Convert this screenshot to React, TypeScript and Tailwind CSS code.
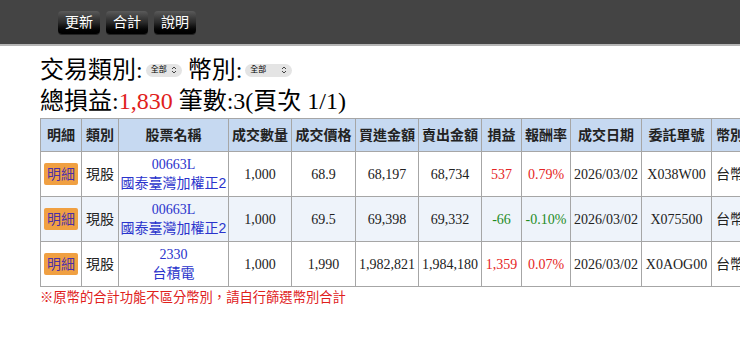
import React from "react";

const serif = "font-['Liberation_Serif','Noto_Sans_CJK_TC',serif]";
const sans = "font-['Liberation_Sans','Noto_Sans_CJK_TC',sans-serif]";

type Row = {
  code: string;
  name: string;
  qty: string;
  price: string;
  buy: string;
  sell: string;
  pl: string;
  rate: string;
  date: string;
  order: string;
  up: boolean;
};

const rows: Row[] = [
  { code: "00663L", name: "國泰臺灣加權正2", qty: "1,000", price: "68.9", buy: "68,197", sell: "68,734", pl: "537", rate: "0.79%", date: "2026/03/02", order: "X038W00", up: true },
  { code: "00663L", name: "國泰臺灣加權正2", qty: "1,000", price: "69.5", buy: "69,398", sell: "69,332", pl: "-66", rate: "-0.10%", date: "2026/03/02", order: "X075500", up: false },
  { code: "2330", name: "台積電", qty: "1,000", price: "1,990", buy: "1,982,821", sell: "1,984,180", pl: "1,359", rate: "0.07%", date: "2026/03/02", order: "X0AOG00", up: true },
];

const headers = ["明細", "類別", "股票名稱", "成交數量", "成交價格", "買進金額", "賣出金額", "損益", "報酬率", "成交日期", "委託單號"];
const widths = [41, 37, 110, 63, 64, 63, 63, 40, 49, 71, 70, 44];

const TopButton = ({ label }: { label: string }) => (
  <button className="h-[23px] w-[42px] rounded-[4px] bg-gradient-to-b from-[#5a5a5a] via-[#2a2a2a] to-black text-[14px] leading-none text-white shadow-[0_1px_0_#222]">
    {label}
  </button>
);

// little up/down chevron like the native select arrow
const Chevrons = () => (
  <svg width="6" height="8" viewBox="0 0 6 8" fill="none" stroke="#444" strokeWidth="1">
    <path d="M1 3 L3 1 L5 3" />
    <path d="M1 5 L3 7 L5 5" />
  </svg>
);

const Select = ({ wide }: { wide?: boolean }) => (
  <span
    className={`mx-[3px] inline-flex h-[13px] items-center justify-between rounded-full bg-[#e4e4e4] pl-[5px] pr-[5px] align-middle text-[8px] leading-none text-black ${sans} ${wide ? "w-[47px]" : "w-[36px]"}`}>
    <span>全部</span>
    <Chevrons />
  </span>
);

const cell = "border border-[#a6a6a6] text-center";

export default function App() {
  return (
    <div className={`h-[340px] w-[740px] overflow-hidden bg-white ${sans}`}>
      <div className="flex h-[46px] items-center gap-[6px] border-b-2 border-[#b5b5b5] bg-[#444] pl-[58px]">
        <TopButton label="更新" />
        <TopButton label="合計" />
        <TopButton label="說明" />
      </div>
      <div className="pl-[40px]">
        <div className={`mt-[9px] flex h-[30px] items-center text-[24px] leading-none text-black ${serif}`}>
          <span className={sans}>交易類別</span>:<Select />
          <span className={`ml-[3px] ${sans}`}>幣別</span>:<Select wide />
        </div>
        <div className={`mt-[1px] h-[32px] text-[24px] leading-[30px] text-black ${serif}`}>
          <span className={sans}>總損益</span>:<span className="text-[#e0201b]">1,830</span>{" "}
          <span className={sans}>筆數</span>:3(<span className={sans}>頁次</span> 1/1)
        </div>
        <table className="w-[714px] table-fixed border-collapse">
          <colgroup>
            {widths.map((w, i) => (
              <col key={i} style={{ width: w }} />
            ))}
          </colgroup>
          <thead>
            <tr className="h-[33px] bg-[#c6d9f1]">
              {headers.map((h) => (
                <th key={h} className={`${cell} whitespace-nowrap text-[14px] font-bold text-[#222]`}>
                  {h}
                </th>
              ))}
              <th className={`${cell} whitespace-nowrap pl-[4px] text-left text-[14px] font-bold text-[#222]`}>幣別</th>
            </tr>
          </thead>
          <tbody>
            {rows.map((r, i) => (
              <tr key={i} className={`h-[45px] ${i === 1 ? "bg-[#eef3fa]" : "bg-white"}`}>
                <td className={cell}>
                  <span className="inline-block h-[22px] rounded-[2px] bg-[#f0a042] px-[3px] text-[14px] leading-[22px] text-[#4b2fa8]">
                    明細
                  </span>
                </td>
                <td className={`${cell} text-[14px] text-[#222]`}>現股</td>
                <td className={`${cell} text-[#2a33cc]`}>
                  <div className={`text-[14px] leading-[18px] ${serif}`}>{r.code}</div>
                  <div className="text-[14px] leading-[18px]">{r.name}</div>
                </td>
                <td className={`${cell} ${serif} text-[14px] text-[#222]`}>{r.qty}</td>
                <td className={`${cell} ${serif} text-[14px] text-[#222]`}>{r.price}</td>
                <td className={`${cell} ${serif} whitespace-nowrap text-[14px] text-[#222]`}>{r.buy}</td>
                <td className={`${cell} ${serif} whitespace-nowrap text-[14px] text-[#222]`}>{r.sell}</td>
                <td className={`${cell} ${serif} text-[14px] ${r.up ? "text-[#e52525]" : "text-[#1f8c1f]"}`}>{r.pl}</td>
                <td className={`${cell} ${serif} text-[14px] ${r.up ? "text-[#e52525]" : "text-[#1f8c1f]"}`}>{r.rate}</td>
                <td className={`${cell} ${serif} whitespace-nowrap text-[14px] text-[#222]`}>{r.date}</td>
                <td className={`${cell} ${serif} whitespace-nowrap text-[14px] text-[#222]`}>{r.order}</td>
                <td className={`${cell} whitespace-nowrap pl-[4px] text-left text-[14px] text-[#222]`}>台幣</td>
              </tr>
            ))}
          </tbody>
        </table>
        <div className="mt-[2px] text-[13.3px] leading-[18px] text-[#e0201b]">
          ※原幣的合計功能不區分幣別，請自行篩選幣別合計
        </div>
      </div>
    </div>
  );
}
